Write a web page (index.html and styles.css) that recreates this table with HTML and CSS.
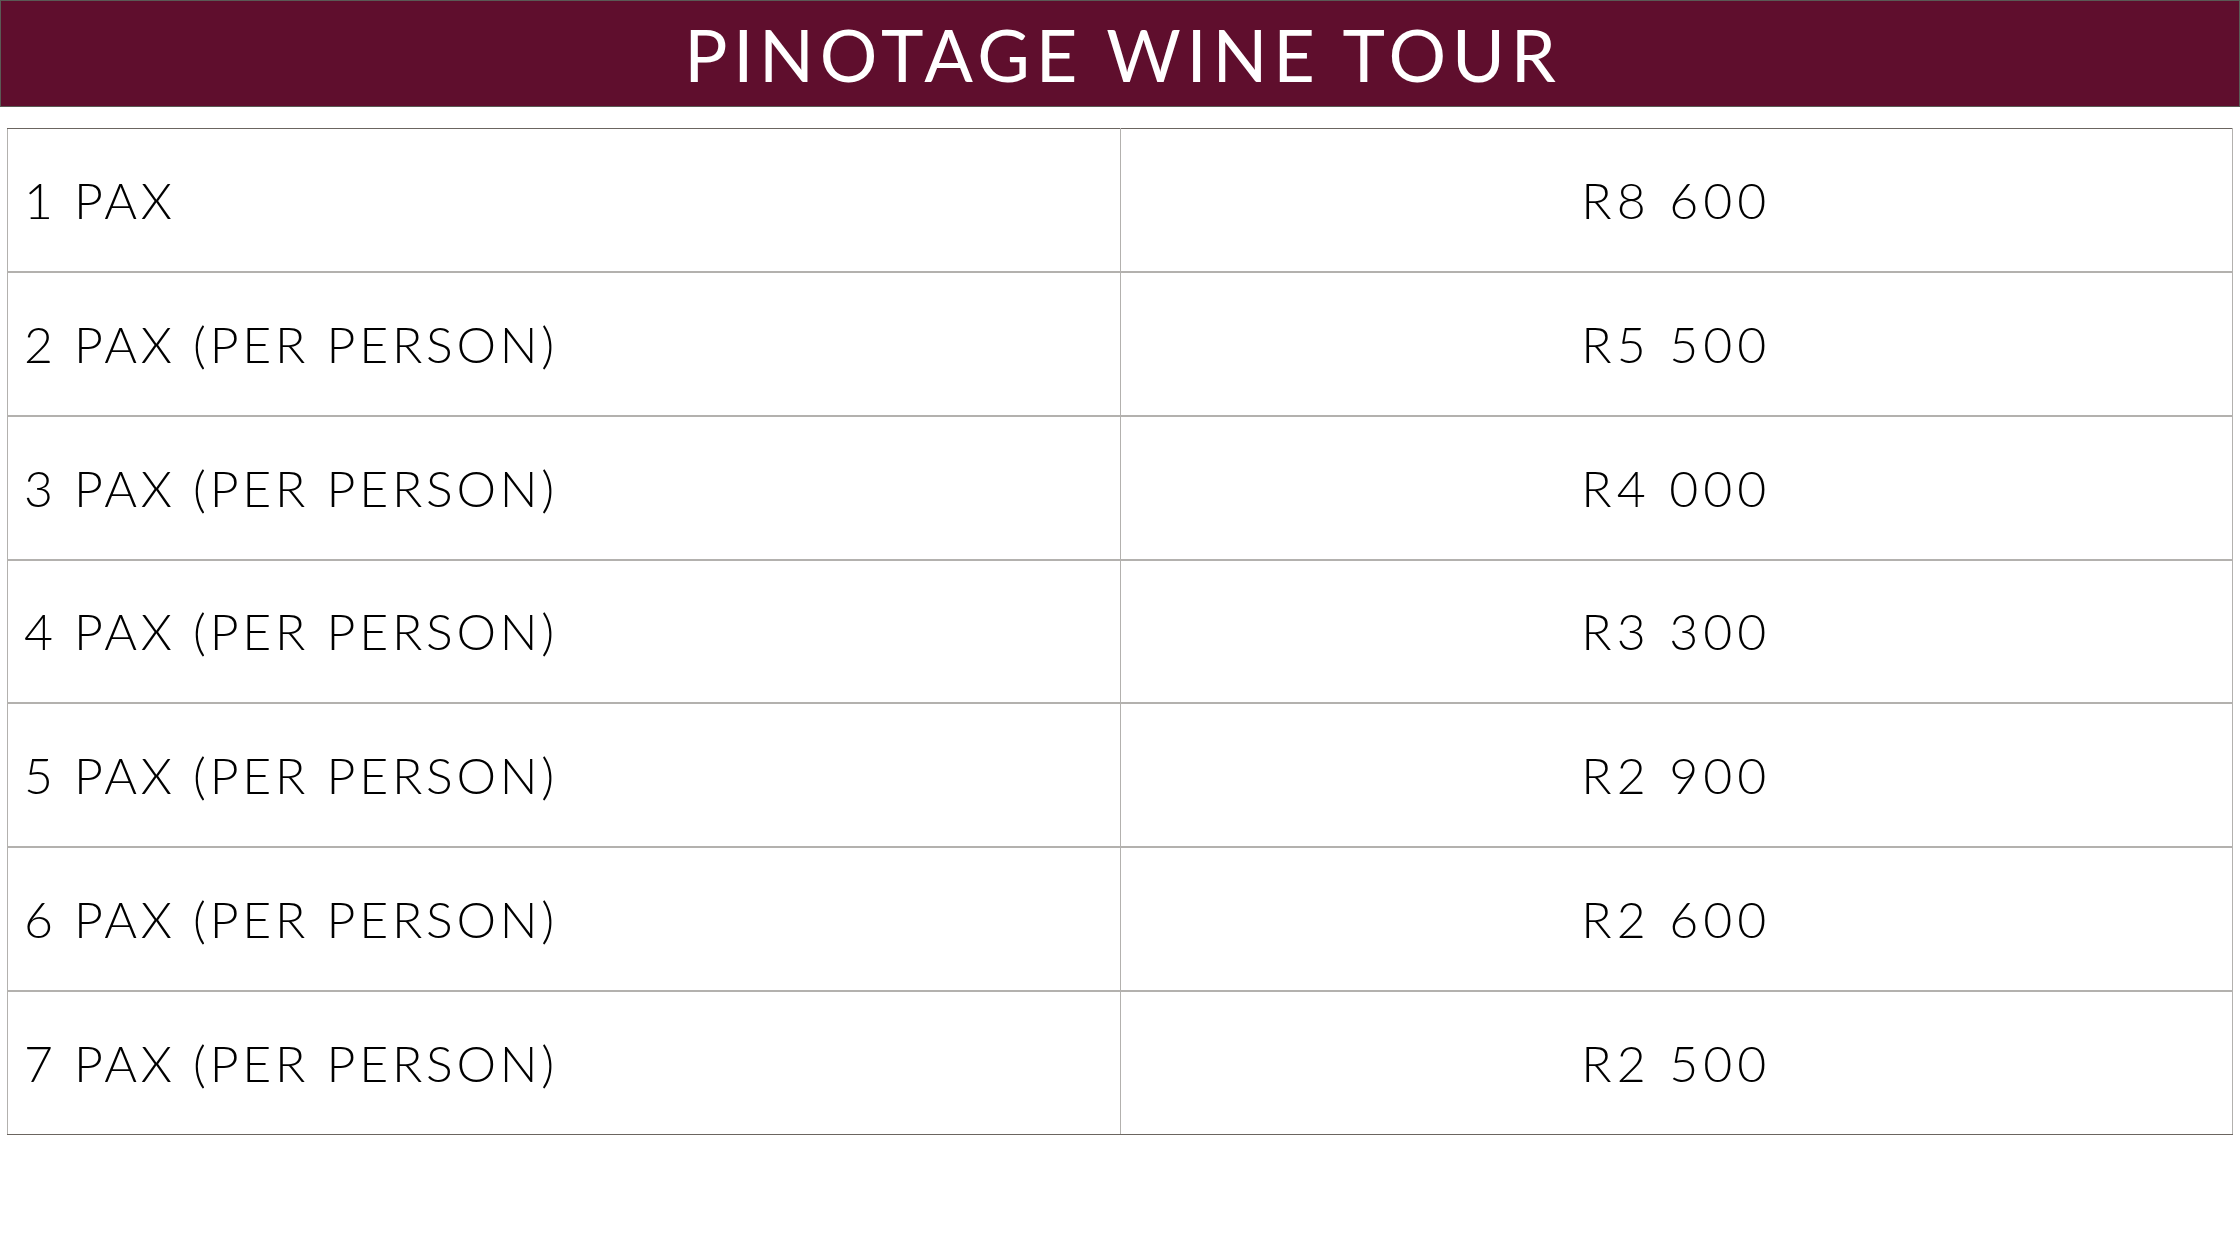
FILE: index.html
```html
<!DOCTYPE html>
<html lang="en">
<head>
<meta charset="utf-8">
<title>Pinotage Wine Tour</title>
<link rel="stylesheet" href="styles.css">
</head>
<body>
<header class="banner">
  <h1 class="banner-title">PINOTAGE WINE TOUR</h1>
</header>
<main class="content">
  <table class="prices">
    <tbody>
      <tr><td class="label">1 PAX</td><td class="price">R8 600</td></tr>
      <tr><td class="label">2 PAX (PER PERSON)</td><td class="price">R5 500</td></tr>
      <tr><td class="label">3 PAX (PER PERSON)</td><td class="price">R4 000</td></tr>
      <tr><td class="label">4 PAX (PER PERSON)</td><td class="price">R3 300</td></tr>
      <tr><td class="label">5 PAX (PER PERSON)</td><td class="price">R2 900</td></tr>
      <tr><td class="label">6 PAX (PER PERSON)</td><td class="price">R2 600</td></tr>
      <tr><td class="label">7 PAX (PER PERSON)</td><td class="price">R2 500</td></tr>
    </tbody>
  </table>
</main>
</body>
</html>
```

FILE: styles.css
```css
html, body {
  margin: 0;
  padding: 0;
  background: #ffffff;
}
body {
  font-family: "Lato", "Open Sans", "Liberation Sans", sans-serif;
  font-weight: 300;
  color: #000000;
}
.banner {
  box-sizing: border-box;
  height: 107px;
  background: #5f0e2d;
  border: 1px solid #5a5a55;
  display: flex;
  align-items: center;
  justify-content: center;
}
.banner-title {
  margin: 0;
  color: #ffffff;
  font-weight: 400;
  font-size: 72px;
  line-height: 1;
  letter-spacing: 0.08em;
  padding-left: 0.08em;
}
.content {
  padding: 21px 7px 0 7px;
}
.prices {
  width: 100%;
  border-collapse: collapse;
  table-layout: fixed;
  border-top: 1px solid #6b6560;
  border-bottom: 1px solid #6b6560;
}
.prices td {
  height: 143.7px;
  box-sizing: border-box;
  padding: 0 0 0 16px;
  font-size: 50px;
  letter-spacing: 0.075em;
  border-top: 2px solid #b3b1ae;
  border-left: 1px solid #b3b1ae;
  border-right: 1px solid #b3b1ae;
  vertical-align: middle;
  white-space: nowrap;
}
.prices tr:first-child td {
  border-top: 1px solid #6b6560;
}
.prices tr:last-child td {
  border-bottom: 1px solid #6b6560;
}
.prices td.price {
  text-align: center;
  padding: 0;
  letter-spacing: 0.1em;
}
```
